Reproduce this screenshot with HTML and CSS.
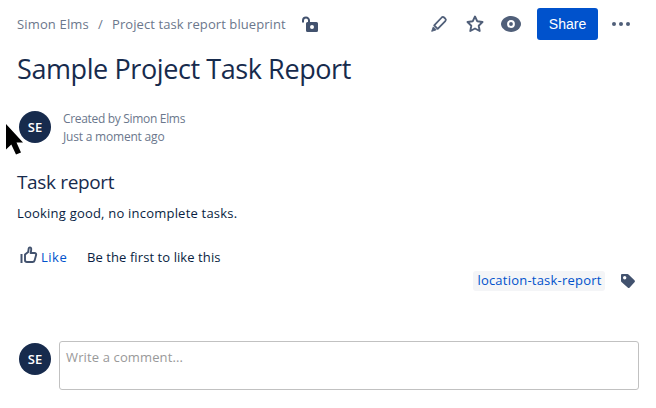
FILE: index.html
```html
<!DOCTYPE html>
<html lang="en">
<head>
<meta charset="utf-8">
<title>Sample Project Task Report</title>
<link rel="stylesheet" href="styles.css">
</head>
<body>
<header class="topbar">
  <nav class="breadcrumbs"><span class="crumb-space">Simon Elms</span><span class="slash">/</span><span class="crumb-parent">Project task report blueprint</span></nav>
  <svg class="lock" width="18" height="18" viewBox="0 0 18 18"><path d="M1 6.500V4.500a3 3 0 0 1 6 0V7" fill="none" stroke="#42526e" stroke-width="2"/><path fill="#42526e" fill-rule="evenodd" d="M5.500 6H14.500A1.500 1.500 0 0 1 16 7.500v7a1.500 1.500 0 0 1-1.500 1.500H5.500A1.500 1.500 0 0 1 4 14.500v-7A1.500 1.500 0 0 1 5.500 6zM10 9a2 2 0 1 0 0 4 2 2 0 0 0 0-4z"/></svg>
  <div class="actions">
    <svg class="edit" width="18" height="18" viewBox="0 0 18 18" fill="none" stroke="#505f79" stroke-width="1.800" stroke-linejoin="round"><path d="M4.200 10.400 11.700 2.500a1.700 1.700 0 0 1 2.400 0l1.200 1.200a1.700 1.700 0 0 1 0 2.400L7.700 13.800z"/><path d="M3.300 11.900 1.700 16.300 6.200 14.800z" fill="#505f79" stroke-width="1"/></svg>
    <svg class="star" width="20" height="18" viewBox="0 0 20 18" fill="none" stroke="#505f79" stroke-width="1.900" stroke-linejoin="round"><path d="M10 1.500 12.300 6.300 17.500 7 13.700 10.700 14.700 16 10 13.500 5.300 16 6.300 10.700 2.500 7 7.700 6.300z"/></svg>
    <svg class="eye" width="20" height="16" viewBox="0 0 20 16"><path fill="#505f79" d="M10 0C4.500 0 0 4.300 0 8s4.500 8 10 8 10-4.300 10-8-4.500-8-10-8z"/><circle cx="10" cy="8" r="2.900" fill="none" stroke="#fff" stroke-width="2"/></svg>
    <button class="share">Share</button>
    <svg class="more" width="18" height="4" viewBox="0 0 18 4" fill="#505f79"><circle cx="2" cy="2" r="2"/><circle cx="9" cy="2" r="2"/><circle cx="16" cy="2" r="2"/></svg>
  </div>
</header>
<main class="page">
  <h1 class="title">Sample Project Task Report</h1>
  <section class="byline">
    <div class="avatar">SE</div>
    <div class="meta"><div class="author">Created by Simon Elms</div><div class="time">Just a moment ago</div></div>
  </section>
  <h2 class="heading">Task report</h2>
  <p class="text">Looking good, no incomplete tasks.</p>
  <div class="likes">
    <svg class="thumb" width="18" height="18" viewBox="0 0 18 18" fill="none" stroke="#42526e" stroke-width="1.900" stroke-linejoin="round"><path d="M1.500 8V17" stroke-width="2"/><path d="M5 8.500 8.200 6 8.700 2.500C9 .9 11 1 11.200 2.700c.1 1.500-.2 2.900-.6 4.300H14.500c1.300 0 1.900 1 1.600 2.100l-1.500 5.400c-.3 1-1 1.500-2 1.500H7C5.600 16 5 15.300 5 14.300z"/></svg>
    <a class="like">Like</a><span class="first">Be the first to like this</span>
  </div>
  <div class="labels">
    <a class="label">location-task-report</a>
    <svg class="tag" width="16" height="16" viewBox="0 0 16 16"><path fill="#42526e" fill-rule="evenodd" d="M2 1h5.500a1.500 1.500 0 0 1 1 .5l6 5.700a1.400 1.400 0 0 1 0 2l-4.800 5.200a1.400 1.400 0 0 1-2 0L1.500 9a1.500 1.500 0 0 1-.5-1V2a1 1 0 0 1 1-1zm2.700 2a1.700 1.700 0 1 0 0 3.400 1.700 1.700 0 0 0 0-3.400z"/></svg>
  </div>
  <div class="reply">
    <div class="avatar">SE</div>
    <div class="comment"><span class="placeholder">Write a comment...</span></div>
  </div>
</main>
<svg class="pointer" width="18" height="32" viewBox="0 0 18 32"><path d="M1 0V25.500L6.300 20.500 11 30.500 16 28.500 11.500 18.500H18z"/></svg>
</body>
</html>
```
FILE: styles.css
```css
* { box-sizing: border-box; }
body { margin: 0; width: 656px; height: 408px; overflow: hidden; background: #fff; color: #172b4d; font-family: "Open Sans", "Noto Sans", sans-serif; font-size: 13px; line-height: 20px; }
svg { display: block; flex: none; }
h1, h2, p { margin: 0; font-weight: 400; white-space: nowrap; }
.topbar { display: flex; align-items: center; height: 48px; padding: 0 26px 0 17px; }
.breadcrumbs { display: flex; color: #6b778c; letter-spacing: 0.08px; white-space: nowrap; }
.crumb-space { width: 72px; letter-spacing: 0.15px; }
.slash { width: 23px; text-align: center; }
.crumb-parent { width: 174px; }
.lock { margin: 2px 0 0 16px; }
.actions { display: flex; align-items: center; margin-left: auto; }
.star { margin-left: 17px; }
.eye { margin-left: 16px; }
.share { width: 61px; height: 32px; margin-left: 16px; padding: 0; border: 0; border-radius: 3px; background: #0052cc; color: #fff; font: 14px/32px "Liberation Sans", sans-serif; }
.more { margin-left: 14px; }
.page { padding: 0 17px; }
.title { height: 40px; margin-top: 1px; font-size: 27px; letter-spacing: -0.41px; line-height: 40px; }
.byline { display: flex; align-items: center; height: 36px; margin-top: 20px; padding-left: 2px; }
.avatar { flex: none; width: 32px; height: 32px; border-radius: 50%; background: #172b4d; color: #fff; font-size: 13px; font-weight: 600; line-height: 32px; text-align: center; }
.meta { margin-left: 12px; padding-top: 2px; color: #6b778c; font-size: 12px; letter-spacing: -0.32px; line-height: 18px; white-space: nowrap; }
.time { letter-spacing: -0.2px; }
.heading { height: 28px; margin-top: 23px; font-size: 19px; letter-spacing: -0.35px; line-height: 28px; }
.text { margin-top: 7px; color: #091e42; letter-spacing: 0.21px; }
.likes { display: flex; align-items: center; height: 20px; margin-top: 24px; padding-left: 3px; }
.thumb { margin-top: -4px; }
.like { width: 26px; margin-left: 3px; color: #0052cc; letter-spacing: 0.5px; }
.first { margin-left: 20px; color: #091e42; letter-spacing: 0.08px; white-space: nowrap; }
.labels { display: flex; justify-content: flex-end; align-items: center; height: 20px; margin-top: 4px; padding-right: 3px; }
.label { width: 132px; height: 20px; padding-left: 1px; border-radius: 3px; background: #f4f5f7; color: #0052cc; letter-spacing: 0.22px; line-height: 18px; text-align: center; white-space: nowrap; }
.tag { margin: -1px 0 0 15px; }
.reply { display: flex; margin-top: 50px; padding-left: 2px; }
.reply .avatar { margin-top: 2px; }
.comment { flex: 1; height: 49px; margin-left: 8px; padding: 5px 6px; border: 1px solid #c1c1c1; border-radius: 3px; color: #999; letter-spacing: 0.13px; }
.pointer { position: absolute; left: 5px; top: 124px; }
```
